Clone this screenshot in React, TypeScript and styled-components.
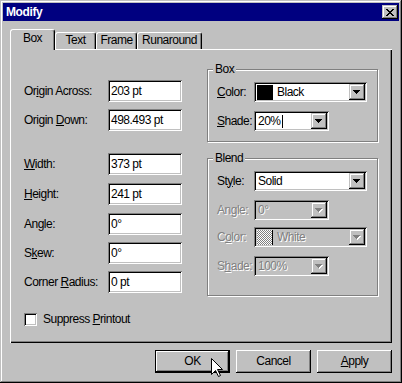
import React from "react";
import styled, { createGlobalStyle, css } from "styled-components";

const GlobalStyle = createGlobalStyle`
  html, body {
    margin: 0;
    padding: 0;
    background: #c0c0c0;
  }
  body {
    font-family: "Liberation Sans", Arial, sans-serif;
    font-size: 12px;
    letter-spacing: -0.5px;
    color: #000;
  }
  * {
    box-sizing: border-box;
  }
`;

const raisedBevel = css`
  box-shadow: inset -1px -1px #000, inset 1px 1px #fff, inset -2px -2px #808080;
`;

const frameBevel = css`
  box-shadow: inset -1px -1px #000, inset 1px 1px #c0c0c0, inset -2px -2px #808080, inset 2px 2px #fff;
`;

const sunkenBevel = css`
  box-shadow: inset 1px 1px #808080, inset -1px -1px #fff, inset 2px 2px #000, inset -2px -2px #c0c0c0;
`;

const disabledText = css`
  color: #808080;
  text-shadow: 1px 1px 0 #fff;
`;

const Window = styled.div`
  position: relative;
  width: 402px;
  height: 383px;
  padding: 3px;
  background: #c0c0c0;
  display: flex;
  flex-direction: column;
  ${frameBevel}
`;

const TitleBar = styled.div`
  height: 18px;
  background: #000080;
  color: #fff;
  display: flex;
  align-items: center;
  justify-content: space-between;
  padding: 0 1px 0 3px;
`;

const Title = styled.span`
  font-weight: bold;
  font-size: 12px;
  letter-spacing: -0.4px;
  line-height: 14px;
`;

const CloseButton = styled.div`
  width: 16px;
  height: 14px;
  background: #c0c0c0;
  display: flex;
  align-items: center;
  justify-content: center;
  padding-top: 1px;
  ${frameBevel}
`;

const Body = styled.div`
  flex: 1;
  display: flex;
  flex-direction: column;
  padding: 8px 7px 0;
`;

const TabStrip = styled.div`
  position: relative;
  z-index: 1;
  display: flex;
  align-items: flex-end;
  height: 20px;
`;

const Tab = styled.div<{ $active?: boolean; $w: number }>`
  width: ${(p) => p.$w}px;
  height: ${(p) => (p.$active ? 21 : 17)}px;
  margin-bottom: ${(p) => (p.$active ? -1 : 0)}px;
  padding-top: ${(p) => (p.$active ? 2 : 1)}px;
  background: #c0c0c0;
  border-style: solid;
  border-width: 1px 1px 0 1px;
  border-color: #fff #000 transparent #fff;
  border-radius: 3px 3px 0 0;
  box-shadow: inset -1px 0 #808080;
  line-height: 13px;
  text-align: center;
`;

const Panel = styled.div`
  height: 294px;
  display: flex;
  align-items: flex-start;
  padding: 13px 0 0 14px;
  box-shadow: inset 1px 1px #fff, inset -1px -1px #000, inset -2px -2px #808080;
`;

const LeftColumn = styled.div`
  margin-top: 18px;
  display: flex;
  flex-direction: column;
`;

const RightColumn = styled.div`
  margin-left: 25px;
  display: flex;
  flex-direction: column;
`;

const FieldRow = styled.div<{ $gap: number }>`
  display: flex;
  align-items: center;
  height: 22px;
  margin-top: ${(p) => p.$gap}px;
`;

const FieldLabel = styled.label`
  width: 84px;
  line-height: 13px;
`;

const TextBox = styled.div`
  width: 74px;
  height: 22px;
  background: #fff;
  padding: 0 3px;
  display: flex;
  align-items: center;
  line-height: 13px;
  ${sunkenBevel}
`;

const CheckRow = styled.div`
  display: flex;
  align-items: center;
  margin-top: 20px;
  line-height: 13px;
`;

const CheckBox = styled.div`
  width: 13px;
  height: 13px;
  background: #fff;
  margin-right: 6px;
  ${sunkenBevel}
`;

const Group = styled.fieldset<{ $gap?: number; $height: number }>`
  margin: ${(p) => p.$gap ?? 0}px 0 0 0;
  width: 171px;
  height: ${(p) => p.$height}px;
  min-width: 0;
  padding: 6px 0 0 9px;
  border: 1px solid #808080;
  box-shadow: 1px 1px 0 #fff, inset 1px 1px 0 #fff;
`;

const Legend = styled.legend`
  margin-left: -4px;
  padding: 0 2px;
  line-height: 14px;
  background: #c0c0c0;
`;

const ComboRow = styled.div<{ $gap: number }>`
  display: flex;
  align-items: center;
  height: 20px;
  margin-top: ${(p) => p.$gap}px;
`;

const ComboLabel = styled.label<{ $disabled?: boolean }>`
  width: 37px;
  line-height: 13px;
  ${(p) => p.$disabled && disabledText}
`;

const Combo = styled.div<{ $w: number; $disabled?: boolean }>`
  width: ${(p) => p.$w}px;
  height: 20px;
  padding: 2px;
  display: flex;
  align-items: center;
  background: ${(p) => (p.$disabled ? "#c0c0c0" : "#fff")};
  ${sunkenBevel}
`;

const ComboValue = styled.span<{ $disabled?: boolean }>`
  flex: 1;
  display: flex;
  align-items: center;
  padding-left: 2px;
  line-height: 13px;
  ${(p) => p.$disabled && disabledText}
`;

const Swatch = styled.span<{ $disabled?: boolean }>`
  width: 16px;
  height: 15px;
  margin: 0 4px 0 -1px;
  background: ${(p) =>
    p.$disabled ? "repeating-conic-gradient(#808080 0 25%, #fff 0 50%) 0 0 / 2px 2px" : "#000"};
  border-right: ${(p) => (p.$disabled ? "1px solid #000" : "none")};
`;

const Caret = styled.span`
  width: 1px;
  height: 13px;
  background: #000;
  margin-left: 1px;
`;

const ArrowButton = styled.div`
  width: 16px;
  height: 16px;
  background: #c0c0c0;
  display: flex;
  align-items: center;
  justify-content: center;
  ${frameBevel}
`;

const ButtonRow = styled.div`
  display: flex;
  justify-content: flex-end;
  gap: 6px;
  margin-top: 7px;
`;

const DialogButton = styled.button<{ $default?: boolean }>`
  width: 75px;
  height: 23px;
  padding: 0;
  border: none;
  background: #c0c0c0;
  font: inherit;
  letter-spacing: inherit;
  color: #000;
  line-height: 13px;
  ${(p) =>
    p.$default
      ? css`
          box-shadow: inset 0 0 0 1px #000, inset -2px -2px #000, inset 2px 2px #fff, inset -3px -3px #808080;
        `
      : raisedBevel}
`;

const Pointer = styled.svg`
  position: absolute;
  left: 211px;
  top: 358px;
`;

function CloseGlyph() {
  return (
    <svg width="8" height="7" viewBox="0 0 8 7" shapeRendering="crispEdges">
      <path
        fill="#000"
        d="M0 0h2v1H0zM6 0h2v1H6zM1 1h2v1H1zM5 1h2v1H5zM2 2h4v1H2zM3 3h2v1H3zM2 4h4v1H2zM1 5h2v1H1zM5 5h2v1H5zM0 6h2v1H0zM6 6h2v1H6z"
      />
    </svg>
  );
}

function DownArrow({ disabled }: { disabled?: boolean }) {
  const d = "M0 0h7v1H0zM1 1h5v1H1zM2 2h3v1H2zM3 3h1v1H3z";
  return (
    <svg width="8" height="5" viewBox="0 0 8 5" shapeRendering="crispEdges">
      {disabled && <path fill="#fff" d={d} transform="translate(1 1)" />}
      <path fill={disabled ? "#808080" : "#000"} d={d} />
    </svg>
  );
}

function ComboBox({
  w,
  disabled,
  children,
}: {
  w: number;
  disabled?: boolean;
  children: React.ReactNode;
}) {
  return (
    <Combo $w={w} $disabled={disabled}>
      <ComboValue $disabled={disabled}>{children}</ComboValue>
      <ArrowButton>
        <DownArrow disabled={disabled} />
      </ArrowButton>
    </Combo>
  );
}

const fields = [
  { label: <>Or<u>i</u>gin Across:</>, value: "203 pt", gap: 0 },
  { label: <>Origin <u>D</u>own:</>, value: "498.493 pt", gap: 7 },
  { label: <><u>W</u>idth:</>, value: "373 pt", gap: 22 },
  { label: <><u>H</u>eight:</>, value: "241 pt", gap: 8 },
  { label: <>Angle:</>, value: "0°", gap: 8 },
  { label: <>S<u>k</u>ew:</>, value: "0°", gap: 7 },
  { label: <>Corner <u>R</u>adius:</>, value: "0 pt", gap: 7 },
];

export default function App() {
  return (
    <>
      <GlobalStyle />
      <Window>
        <TitleBar>
          <Title>Modify</Title>
          <CloseButton>
            <CloseGlyph />
          </CloseButton>
        </TitleBar>
        <Body>
          <TabStrip>
            <Tab $active $w={45}>Box</Tab>
            <Tab $w={41}>Text</Tab>
            <Tab $w={41}>Frame</Tab>
            <Tab $w={65}>Runaround</Tab>
          </TabStrip>
          <Panel>
            <LeftColumn>
              {fields.map((f, i) => (
                <FieldRow key={i} $gap={f.gap}>
                  <FieldLabel>{f.label}</FieldLabel>
                  <TextBox>{f.value}</TextBox>
                </FieldRow>
              ))}
              <CheckRow>
                <CheckBox />
                <span>
                  Suppress <u>P</u>rintout
                </span>
              </CheckRow>
            </LeftColumn>
            <RightColumn>
              <Group $height={80}>
                <Legend>Box</Legend>
                <ComboRow $gap={0}>
                  <ComboLabel>
                    <u>C</u>olor:
                  </ComboLabel>
                  <ComboBox w={113}>
                    <Swatch />
                    Black
                  </ComboBox>
                </ComboRow>
                <ComboRow $gap={9}>
                  <ComboLabel>
                    <u>S</u>hade:
                  </ComboLabel>
                  <ComboBox w={75}>
                    20%
                    <Caret />
                  </ComboBox>
                </ComboRow>
              </Group>
              <Group $gap={9} $height={145}>
                <Legend>Blend</Legend>
                <ComboRow $gap={0}>
                  <ComboLabel>
                    St<u>y</u>le:
                  </ComboLabel>
                  <ComboBox w={113}>Solid</ComboBox>
                </ComboRow>
                <ComboRow $gap={9}>
                  <ComboLabel $disabled>
                    An<u>g</u>le:
                  </ComboLabel>
                  <ComboBox w={75} disabled>
                    0°
                  </ComboBox>
                </ComboRow>
                <ComboRow $gap={7}>
                  <ComboLabel $disabled>
                    C<u>o</u>lor:
                  </ComboLabel>
                  <ComboBox w={113} disabled>
                    <Swatch $disabled />
                    White
                  </ComboBox>
                </ComboRow>
                <ComboRow $gap={9}>
                  <ComboLabel $disabled>
                    S<u>h</u>ade:
                  </ComboLabel>
                  <ComboBox w={75} disabled>
                    100%
                  </ComboBox>
                </ComboRow>
              </Group>
            </RightColumn>
          </Panel>
          <ButtonRow>
            <DialogButton $default>OK</DialogButton>
            <DialogButton>Cancel</DialogButton>
            <DialogButton>
              <u>A</u>pply
            </DialogButton>
          </ButtonRow>
        </Body>
        <Pointer width="13" height="20" viewBox="0 0 13 20">
          <polygon
            points="0.5,0.5 0.5,16.5 4.5,12.5 7.5,18.5 9.5,17.5 6.5,11.5 11.5,11.5"
            fill="#fff"
            stroke="#000"
            strokeWidth="1"
          />
        </Pointer>
      </Window>
    </>
  );
}
